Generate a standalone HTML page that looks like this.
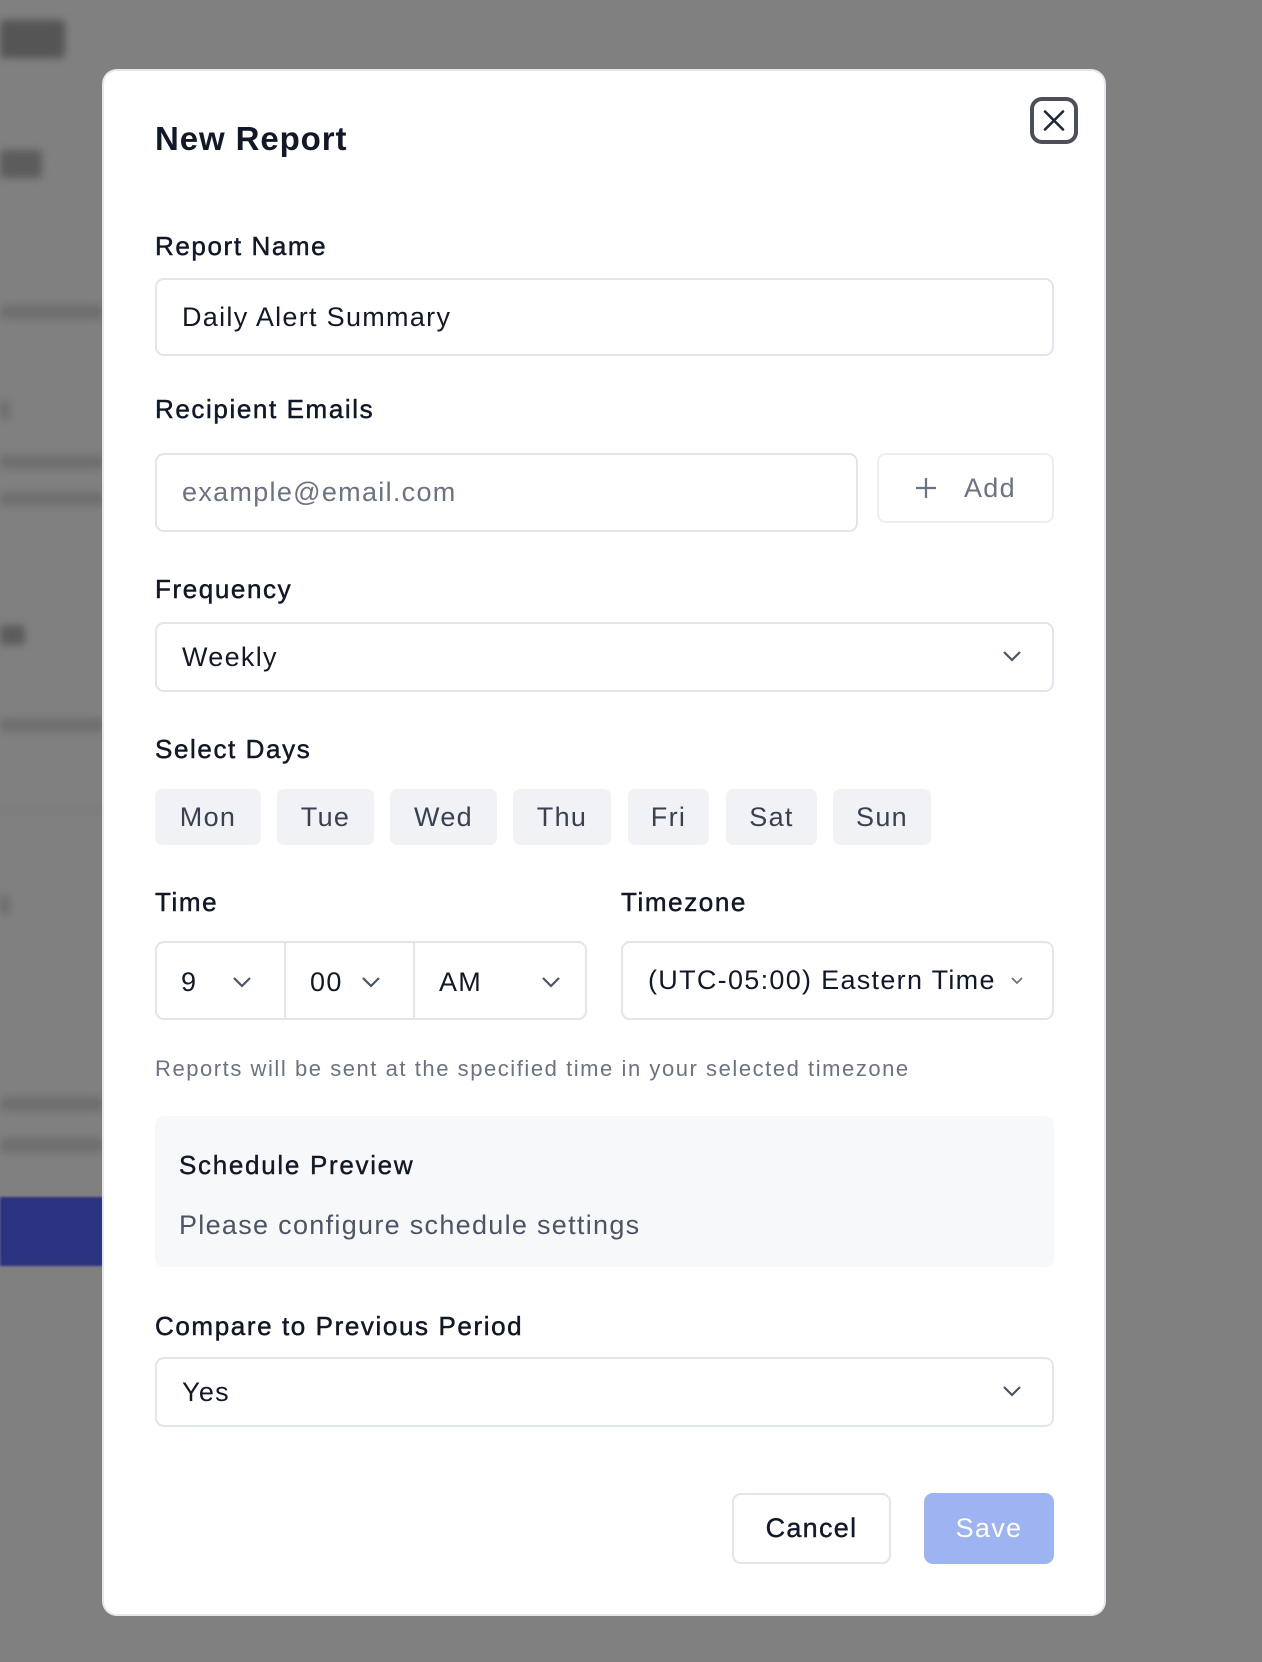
<!DOCTYPE html>
<html><head><meta charset="utf-8"><style>
*{box-sizing:border-box;margin:0;padding:0}
body{width:1262px;height:1662px;background:#808080;position:relative;overflow:hidden;font-family:"Liberation Sans",sans-serif;color:#111827}
.a{position:absolute}
.bg{position:absolute;background:#6e6e6e;filter:blur(4px);border-radius:4px}
.modal{position:absolute;left:104px;top:71px;width:1000px;height:1543px;background:#fff;border-radius:13px;box-shadow:0 0 0 2px #e5e7eb;letter-spacing:1.3px}
.lbl{position:absolute;left:51px;font-size:26px;color:#111827;line-height:30px;letter-spacing:1.6px;-webkit-text-stroke:0.5px #111827}
.box{position:absolute;border:2px solid #e2e5ec;border-radius:9px;background:#fff;font-size:27px;display:flex;align-items:center;padding-left:25px}
.pill{position:absolute;top:718px;height:56px;background:#f1f2f5;border-radius:7px;font-size:27px;color:#374151;display:flex;align-items:center;justify-content:center}
.chev{position:absolute}
</style></head><body>
<div class="bg" style="left:0;top:20px;width:65px;height:38px;background:#555"></div>
<div class="bg" style="left:0;top:150px;width:42px;height:28px;background:#5c5c5c"></div>
<div class="bg" style="left:0;top:305px;width:104px;height:14px"></div>
<div class="bg" style="left:0;top:400px;width:10px;height:20px"></div>
<div class="bg" style="left:0;top:455px;width:104px;height:14px"></div>
<div class="bg" style="left:0;top:492px;width:104px;height:14px"></div>
<div class="bg" style="left:0;top:625px;width:25px;height:20px;background:#5c5c5c"></div>
<div class="bg" style="left:0;top:718px;width:104px;height:14px"></div>
<div class="bg" style="left:0;top:808px;width:104px;height:3px;background:#777"></div>
<div class="bg" style="left:0;top:895px;width:10px;height:20px"></div>
<div class="bg" style="left:0;top:1097px;width:104px;height:14px"></div>
<div class="bg" style="left:0;top:1138px;width:104px;height:14px"></div>
<div class="a" style="left:0;top:1197px;width:104px;height:69px;background:#2c3380;filter:blur(1px)"></div>

<div class="modal">
<div class="a" style="left:51px;top:50px;font-size:33px;font-weight:700;line-height:36px;letter-spacing:0.9px">New Report</div>
<div class="a" style="left:926px;top:26px;width:48px;height:47px;border:4px solid #4b5058;border-radius:12px">
<svg width="40" height="39" viewBox="0 0 40 39" style="position:absolute;left:0;top:0"><path d="M11 10.5L29 28.5M29 10.5L11 28.5" stroke="#1f2937" stroke-width="2.6" stroke-linecap="round"/></svg></div>

<div class="lbl" style="top:160px">Report Name</div>
<div class="box" style="left:51px;top:207px;width:899px;height:78px">Daily Alert Summary</div>

<div class="lbl" style="top:323px">Recipient Emails</div>
<div class="box" style="left:51px;top:382px;width:703px;height:79px;color:#6b7280">example@email.com</div>
<div class="box" style="left:773px;top:382px;width:177px;height:70px;border-color:#eceef2;color:#6b7280;padding-left:34px">
<svg width="26" height="26" viewBox="0 0 26 26"><path d="M13 3V23M3 13H23" stroke="#6b7280" stroke-width="2.2"/></svg><span style="margin-left:25px">Add</span></div>

<div class="lbl" style="top:503px">Frequency</div>
<div class="box" style="left:51px;top:551px;width:899px;height:70px">Weekly
<svg class="chev" style="right:30px;top:25px" width="20" height="14" viewBox="0 0 20 14"><path d="M2 3L10 11L18 3" fill="none" stroke="#4b5563" stroke-width="2.2"/></svg></div>

<div class="lbl" style="top:663px">Select Days</div>
<div class="pill" style="left:51px;width:106px">Mon</div>
<div class="pill" style="left:173px;width:97px">Tue</div>
<div class="pill" style="left:286px;width:107px">Wed</div>
<div class="pill" style="left:409px;width:98px">Thu</div>
<div class="pill" style="left:524px;width:81px">Fri</div>
<div class="pill" style="left:622px;width:91px">Sat</div>
<div class="pill" style="left:729px;width:98px">Sun</div>

<div class="lbl" style="top:816px">Time</div>
<div class="lbl" style="top:816px;left:517px">Timezone</div>
<div class="box" style="left:51px;top:870px;width:432px;height:79px;padding:0">
 <div class="a" style="left:24px;top:24px">9</div>
 <svg class="chev" style="left:75px;top:32px" width="20" height="14" viewBox="0 0 20 14"><path d="M2 3L10 11L18 3" fill="none" stroke="#4b5563" stroke-width="2.2"/></svg>
 <div class="a" style="left:127px;top:0;width:2px;height:75px;background:#e2e5ec"></div>
 <div class="a" style="left:153px;top:24px">00</div>
 <svg class="chev" style="left:204px;top:32px" width="20" height="14" viewBox="0 0 20 14"><path d="M2 3L10 11L18 3" fill="none" stroke="#4b5563" stroke-width="2.2"/></svg>
 <div class="a" style="left:256px;top:0;width:2px;height:75px;background:#e2e5ec"></div>
 <div class="a" style="left:282px;top:24px">AM</div>
 <svg class="chev" style="left:384px;top:32px" width="20" height="14" viewBox="0 0 20 14"><path d="M2 3L10 11L18 3" fill="none" stroke="#4b5563" stroke-width="2.2"/></svg>
</div>
<div class="box" style="left:517px;top:870px;width:433px;height:79px">(UTC-05:00) Eastern Time
<svg class="chev" style="right:28px;top:33px" width="14" height="10" viewBox="0 0 14 10"><path d="M2 2L7 7L12 2" fill="none" stroke="#6b7280" stroke-width="1.8"/></svg></div>

<div class="a" style="left:51px;top:985px;font-size:22px;color:#6b7280;letter-spacing:1.55px">Reports will be sent at the specified time in your selected timezone</div>

<div class="a" style="left:51px;top:1045px;width:899px;height:151px;background:#f7f8fa;border-radius:9px">
 <div class="a" style="left:24px;top:34px;font-size:26px;letter-spacing:1.7px;-webkit-text-stroke:0.4px #111827">Schedule Preview</div>
 <div class="a" style="left:24px;top:94px;font-size:27px;color:#4b5563">Please configure schedule settings</div>
</div>

<div class="lbl" style="top:1240px">Compare to Previous Period</div>
<div class="box" style="left:51px;top:1286px;width:899px;height:70px">Yes
<svg class="chev" style="right:30px;top:25px" width="20" height="14" viewBox="0 0 20 14"><path d="M2 3L10 11L18 3" fill="none" stroke="#4b5563" stroke-width="2.2"/></svg></div>

<div class="box" style="left:628px;top:1422px;width:159px;height:71px;justify-content:center;padding:0;-webkit-text-stroke:0.4px #111827">Cancel</div>
<div class="a" style="left:820px;top:1422px;width:130px;height:71px;background:#9db3f2;border-radius:9px;color:#fff;font-size:27px;display:flex;align-items:center;justify-content:center">Save</div>
</div>
</body></html>
